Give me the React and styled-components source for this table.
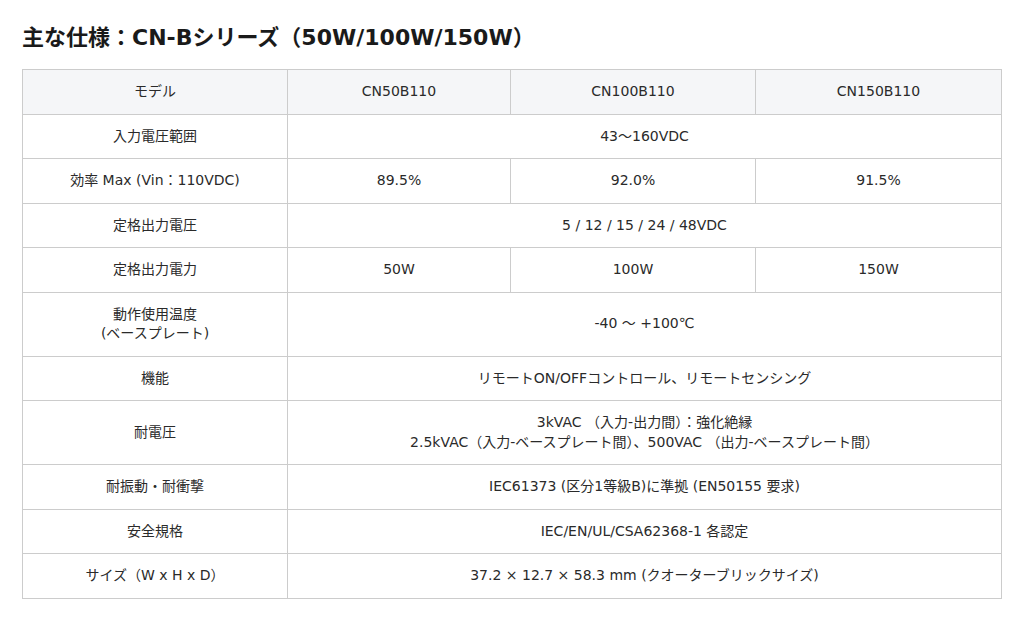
import React from "react";
import styled, { createGlobalStyle } from "styled-components";

const GlobalStyle = createGlobalStyle`
	body {
		margin: 0;
		background: #fff;
		font-family: "DejaVu Sans", "Noto Sans CJK JP", sans-serif;
		color: #333;
	}
`;

const specs = [
	{ label: ["入力電圧範囲"], values: ["43～160VDC"] },
	{ label: ["効率 Max (Vin：110VDC)"], values: ["89.5%", "92.0%", "91.5%"] },
	{ label: ["定格出力電圧"], values: ["5 / 12 / 15 / 24 / 48VDC"] },
	{ label: ["定格出力電力"], values: ["50W", "100W", "150W"] },
	{ label: ["動作使用温度", "(ベースプレート)"], values: ["-40 ～ +100℃"] },
	{ label: ["機能"], values: ["リモートON/OFFコントロール、リモートセンシング"] },
	{
		label: ["耐電圧"],
		values: [
			[
				"3kVAC （入力-出力間）：強化絶縁",
				"2.5kVAC（入力-ベースプレート間）、500VAC （出力-ベースプレート間）",
			],
		],
	},
	{ label: ["耐振動・耐衝撃"], values: ["IEC61373 (区分1等級B)に準拠 (EN50155 要求)"] },
	{ label: ["安全規格"], values: ["IEC/EN/UL/CSA62368-1 各認定"] },
	{ label: ["サイズ（W x H x D）"], values: ["37.2 × 12.7 × 58.3 mm (クオーターブリックサイズ)"] },
];

const Lines = ({ lines }) =>
	[].concat(lines).map((line, i) => <div key={i}>{line}</div>);

const App = () => {
	return (
		<Wrapper>
			<GlobalStyle />
			<Title>主な仕様：CN-Bシリーズ（50W/100W/150W）</Title>
			<SpecTable>
				<colgroup>
					<col style={{ width: 265 }} />
					<col style={{ width: 223 }} />
					<col style={{ width: 245 }} />
					<col />
				</colgroup>
				<thead>
					<tr>
						<Cell as='th' $head>モデル</Cell>
						<Cell as='th' $head>CN50B110</Cell>
						<Cell as='th' $head>CN100B110</Cell>
						<Cell as='th' $head>CN150B110</Cell>
					</tr>
				</thead>
				<tbody>
					{specs.map((row, i) => (
						<tr key={i}>
							<Cell>
								<Lines lines={row.label} />
							</Cell>
							{row.values.length === 1 ? (
								<Cell colSpan={3}>
									<Lines lines={row.values[0]} />
								</Cell>
							) : (
								row.values.map((v, j) => <Cell key={j}>{v}</Cell>)
							)}
						</tr>
					))}
				</tbody>
			</SpecTable>
		</Wrapper>
	);
};

const Wrapper = styled.section`
	width: 980px;
	padding: 22px 0 0 22px;
`;

const Title = styled.h2`
	margin: 0 0 16px;
	font-size: 22px;
	line-height: 31px;
	font-weight: bold;
	color: #1a1a1a;
`;

const SpecTable = styled.table`
	width: 980px;
	border-collapse: collapse;
	table-layout: fixed;
`;

const Cell = styled.td`
	border: 1px solid #ccc;
	padding: 12px 8px;
	font-size: 14px;
	line-height: 19.5px;
	font-weight: normal;
	text-align: center;
	vertical-align: middle;
	color: #2a2a2a;
	background: ${(p) => (p.$head ? "#f5f6f8" : "#fff")};
`;

export default App;
